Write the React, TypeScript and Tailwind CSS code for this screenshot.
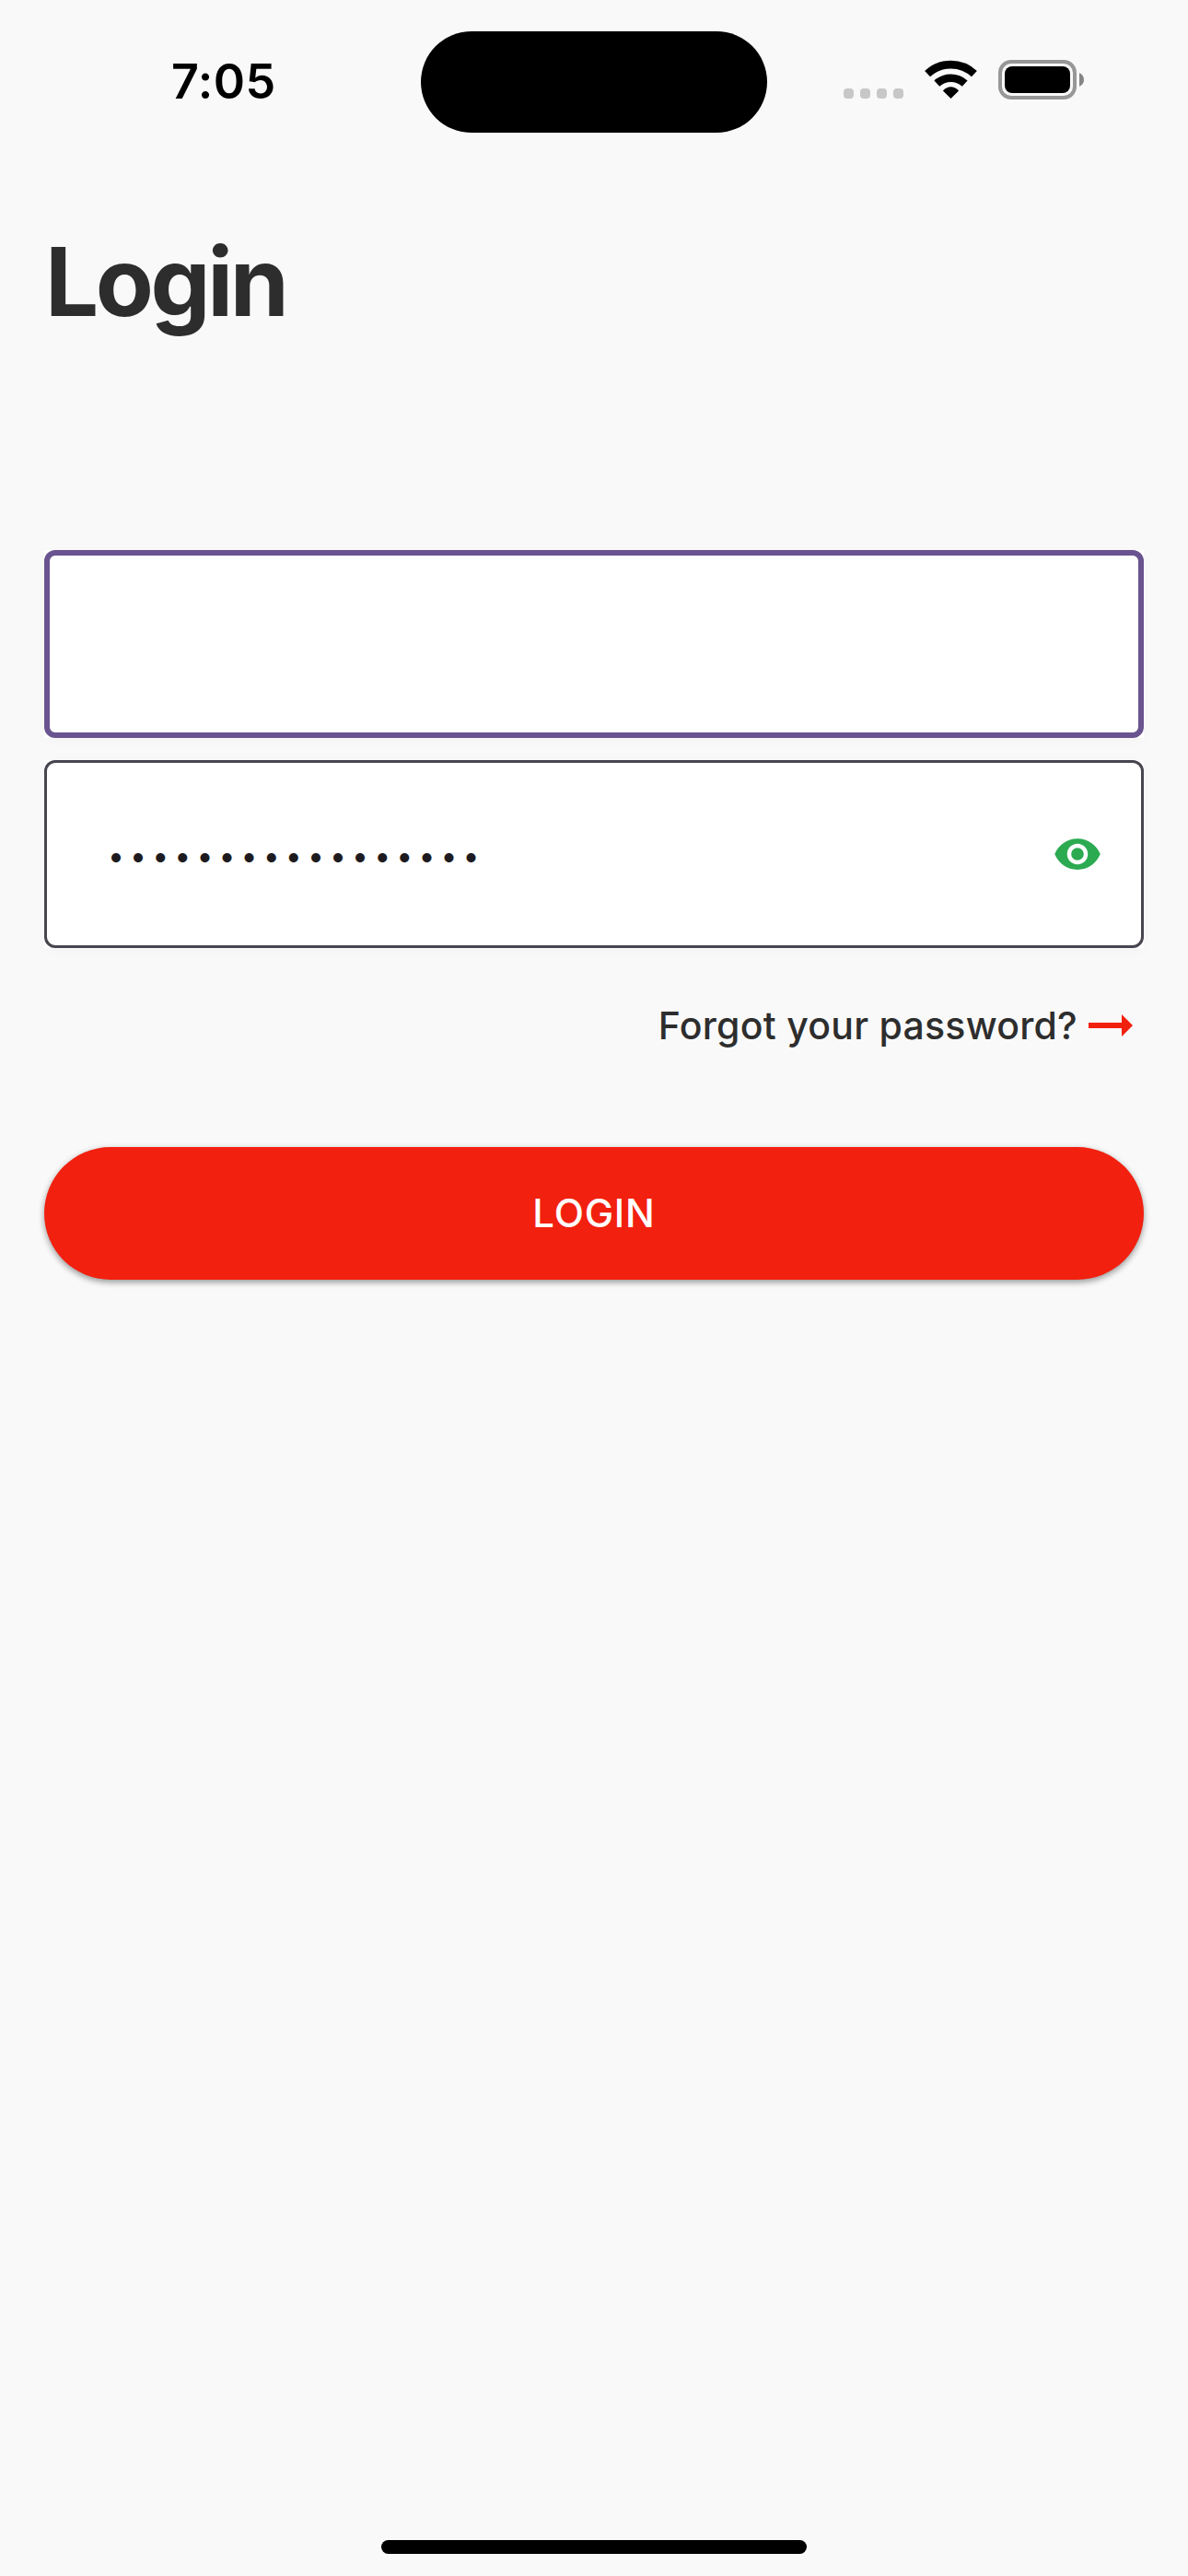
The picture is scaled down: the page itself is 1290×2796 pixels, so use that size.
import React from "react";

function StatusBar() {
  return (
    <header className="flex h-[177px] items-start">
      <div className="w-[457px] shrink-0 pl-[186px] pt-[57px]">
        <span className="block text-[52px] leading-[64px] font-semibold tracking-[0.5px] text-black">
          7:05
        </span>
      </div>
      <div className="mt-[34px] h-[110px] w-[376px] shrink-0 rounded-full bg-black" />
      <div className="ml-[83px] mt-[65px] flex h-[43px] items-start">
        <div className="mt-[31px] flex gap-[7px]">
          <i className="size-[11px] rounded-[4px] bg-[#c7c7c7]" />
          <i className="size-[11px] rounded-[4px] bg-[#c7c7c7]" />
          <i className="size-[11px] rounded-[4px] bg-[#c7c7c7]" />
          <i className="size-[11px] rounded-[4px] bg-[#c7c7c7]" />
        </div>
        <svg className="ml-[22px] h-[43px] w-[59px]" viewBox="0 0 59 43" fill="none">
          <g transform="translate(0.5 0)">
            <path d="M3.6 15.2 A37 37 0 0 1 54.4 15.2" stroke="#000" strokeWidth="8.6" />
            <path d="M13.8 25.6 A22.5 22.5 0 0 1 44.2 25.6" stroke="#000" strokeWidth="8.6" />
            <path d="M20.4 33.4 Q29 25 37.6 33.4 L29 42 Z" fill="#000" />
          </g>
        </svg>
        <div className="ml-[22px] h-[43px] w-[85px] rounded-[14px] border-[4px] border-[#979797] p-[3px]">
          <div className="h-full w-full rounded-[8px] bg-black" />
        </div>
        <svg className="ml-[3px] mt-[14px] h-[15px] w-[5px]" viewBox="0 0 5 15">
          <path d="M0 0 Q5 2.5 5 7.5 Q5 12.5 0 15 Z" fill="#858585" />
        </svg>
      </div>
    </header>
  );
}

export default function App() {
  return (
    <div className="flex h-[2796px] w-[1290px] flex-col overflow-hidden bg-[#f9f9f9] font-['Inter',sans-serif]">
      <StatusBar />
      <main className="flex flex-1 flex-col px-[48px]">
        <h1 className="mt-[67px] h-[124px] pl-[1px] text-[103px] leading-[124px] font-bold tracking-[-3.4px] text-[#2d2d2d]">
          Login
        </h1>

        <div className="mt-[229px] bg-white shadow-[0_3px_12px_rgba(0,0,0,0.025)]">
          <div className="h-[204px] rounded-[12px] border-[6px] border-[#69548f]" />
        </div>

        <div className="mt-[24px] bg-white shadow-[0_3px_12px_rgba(0,0,0,0.025)]">
          <div className="flex h-[204px] items-center justify-between rounded-[12px] border-[3px] border-[#49454f] pl-[66px] pr-[42px]">
            <span className="pt-[4px] text-[32px] leading-[40px] tracking-[6.1px] text-[#1d1b20]">
              •••••••••••••••••
            </span>
            <svg className="size-[54px]" viewBox="0 0 24 24" fill="#2baa52">
              <path d="M12 4.5C7 4.5 2.73 7.61 1 12c1.73 4.39 6 7.5 11 7.5s9.27-3.11 11-7.5c-1.73-4.39-6-7.5-11-7.5zM12 17c-2.76 0-5-2.24-5-5s2.24-5 5-5 5 2.24 5 5-2.24 5-5 5zm0-8c-1.66 0-3 1.34-3 3s1.34 3 3 3 3-1.34 3-3-1.34-3-3-3z" />
            </svg>
          </div>
        </div>

        <div className="mt-[59px] flex h-[50px] items-center justify-end pr-[12px]">
          <span className="text-[41px] leading-[50px] font-medium tracking-[0.25px] text-[#2d2d2d]">
            Forgot your password?
          </span>
          <svg className="ml-[12px] h-[24px] w-[48px]" viewBox="0 0 48 24" fill="#f2200f">
            <path d="M0 9h36V0l12 12-12 12v-9H0z" />
          </svg>
        </div>

        <button className="mt-[107px] flex h-[144px] items-center justify-center rounded-full bg-[#f2200f] text-[42px] leading-[50px] font-medium tracking-[0.8px] text-white shadow-[0_3px_6px_rgba(0,0,0,0.3),0_2px_9px_rgba(0,0,0,0.12)]">
          LOGIN
        </button>
      </main>
      <div className="mb-[24px] h-[15px] w-[462px] self-center rounded-full bg-black" />
    </div>
  );
}
